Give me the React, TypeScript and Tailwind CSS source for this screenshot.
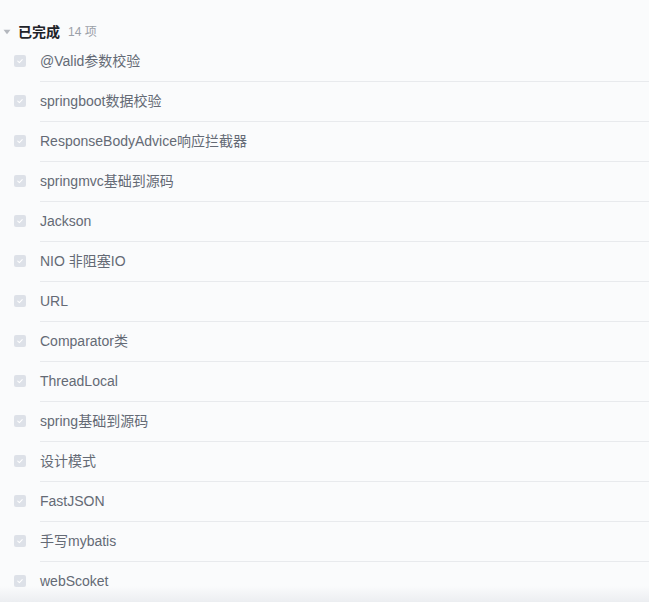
const items = [
  "@Valid参数校验",
  "springboot数据校验",
  "ResponseBodyAdvice响应拦截器",
  "springmvc基础到源码",
  "Jackson",
  "NIO 非阻塞IO",
  "URL",
  "Comparator类",
  "ThreadLocal",
  "spring基础到源码",
  "设计模式",
  "FastJSON",
  "手写mybatis",
  "webScoket",
];

function DoneBox() {
  return (
    <span className="mb-[2px] flex h-[12px] w-[12px] shrink-0 items-center justify-center rounded-[2px] bg-[#dde1e8]">
      <svg width="8" height="8" viewBox="0 0 10 10" fill="none">
        <path d="M2.2 5.2 L4.2 7 L7.8 3.2" stroke="#ffffff" strokeWidth="1.3" strokeLinecap="round" strokeLinejoin="round" />
      </svg>
    </span>
  );
}

export default function App() {
  return (
    <div
      className="relative h-[602px] w-[649px] overflow-hidden bg-[#fafbfc] pt-[22px]"
      style={{ fontFamily: '"Liberation Sans", "Noto Sans CJK SC", sans-serif' }}
    >
      <div className="flex h-5 items-center">
        <svg width="8" height="6" viewBox="0 0 8 6" className="ml-[3px]">
          <path d="M0.5 0.8 L7.5 0.8 L4 5.2 Z" fill="#b4b8be" />
        </svg>
        <span className="ml-[7px] text-[14px] font-bold text-[#1f2329]">已完成</span>
        <span className="ml-[8px] text-[12px] text-[#9aa0a8]">14 项</span>
      </div>

      <ul>
        {items.map((name) => (
          <li key={name} className="flex h-10 items-center pl-[14px]">
            <DoneBox />
            <div className="ml-[14px] flex h-full flex-1 items-center border-b border-[#e8eaed]">
              <span className="text-[14px] text-[#646a75]">{name}</span>
            </div>
          </li>
        ))}
      </ul>

      <div className="pointer-events-none absolute inset-x-0 bottom-0 h-4 bg-gradient-to-b from-transparent to-[#eceef1]" />
    </div>
  );
}
